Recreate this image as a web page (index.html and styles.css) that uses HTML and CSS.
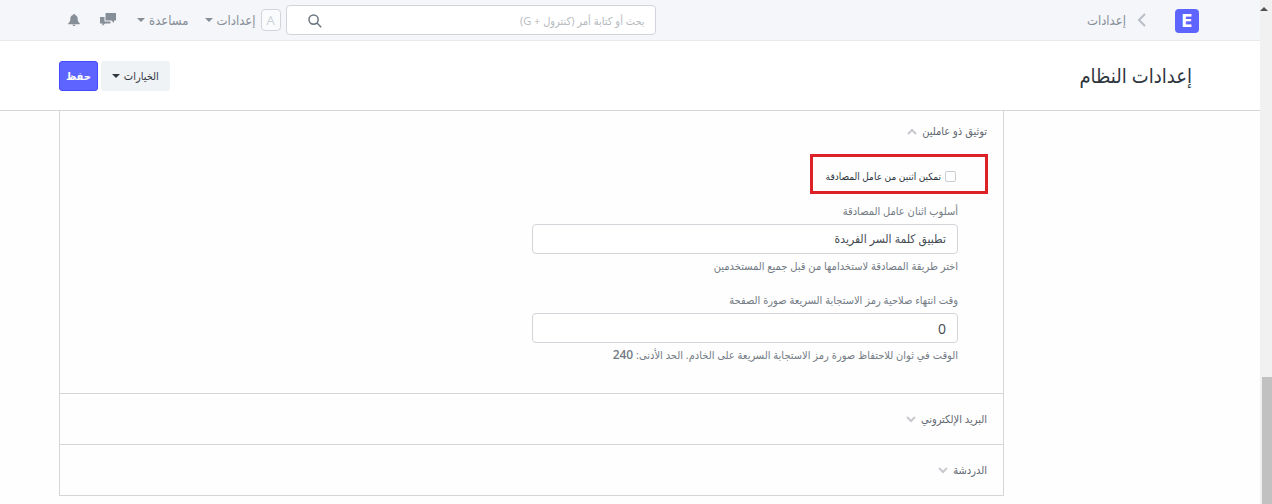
FILE: index.html
```html
<!DOCTYPE html>
<html lang="ar" dir="rtl">
<head>
    <meta charset="UTF-8">
    <meta name="viewport" content="width=device-width, initial-scale=1.0">
    <title>إعدادات النظام</title>
    <link rel="stylesheet" href="styles.css">
</head>
<body>
    <div class="scrollbar">
        <span class="scroll-up"></span>
        <span class="scroll-thumb"></span>
    </div>

    <div class="page">
        <header class="navbar">
            <div class="container navbar-inner">
                <a class="logo" href="#">E</a>
                <svg class="crumb-arrow" viewBox="0 0 9 14"><path d="M8 1L2 7l6 6"/></svg>
                <a class="crumb" href="#">إعدادات</a>

                <form class="search">
                    <input type="text" aria-label="بحث" placeholder="بحث أو كتابة أمر (كنترول + G)">
                    <svg class="search-icon" viewBox="0 0 14 14"><circle cx="5.6" cy="5.6" r="4.6"/><path d="M9 9l4.2 4.2"/></svg>
                </form>

                <span class="avatar">A</span>
                <button class="nav-link nav-settings" type="button">إعدادات <span class="caret"></span></button>
                <button class="nav-link nav-help" type="button">مساعدة <span class="caret"></span></button>
                <button class="nav-icon" type="button" aria-label="المحادثات">
                    <svg width="16" height="14" viewBox="0 0 16 14"><path d="M6 0h9.500q.5 0 .5.500V7q0 .5-.5.500H14V10L11.500 7.500H6q-.5 0-.5-.5V.5Q5.500 0 6 0z"/><path d="M.5 4H4.500V8q0 .6.6.6h5.400V10q0 .5-.5.5H5L2.500 13v-2.500h-2Q0 10.500 0 10V4.500Q0 4 .5 4z"/></svg>
                </button>
                <button class="nav-icon" type="button" aria-label="الإشعارات">
                    <svg width="12" height="12" viewBox="0 0 12 12"><path d="M6 0c.6 0 1 .4 1 .9C8.700 1.300 9.600 2.600 9.600 4.300c0 2.600.7 4 2 4.900.5.400.3 1-.2 1H.6c-.5 0-.7-.6-.2-1 1.300-.9 2-2.300 2-4.900C2.400 2.600 3.300 1.300 5 .9 5 .4 5.400 0 6 0zM4.500 10.700h3C7.400 11.500 6.800 12 6 12s-1.400-.5-1.500-1.300z"/></svg>
                </button>
            </div>
        </header>

        <div class="page-head">
            <div class="container page-head-inner">
                <h1>إعدادات النظام</h1>
                <button class="btn" type="button">الخيارات <span class="caret"></span></button>
                <button class="btn btn-primary" type="button">حفظ</button>
            </div>
        </div>

        <main class="container">
            <div class="form-layout">
                <section class="section section-open">
                    <h2 class="section-title">توثيق ذو عاملين
                        <svg class="toggle" viewBox="0 0 10 7"><path d="M1 6l4-4 4 4"/></svg>
                    </h2>
                    <div class="form-column">
                        <div class="check">
                            <input type="checkbox" id="enable">
                            <label for="enable">تمكين اثنين من عامل المصادقة</label>
                            <span class="highlight"></span>
                        </div>
                        <div class="field">
                            <label for="method">أسلوب اثنان عامل المصادقة</label>
                            <select id="method">
                                <option>تطبيق كلمة السر الفريدة</option>
                            </select>
                            <p class="help">اختر طريقة المصادقة لاستخدامها من قبل جميع المستخدمين</p>
                        </div>
                        <div class="field">
                            <label for="lifespan">وقت انتهاء صلاحية رمز الاستجابة السريعة صورة الصفحة</label>
                            <input type="text" id="lifespan" value="0">
                            <p class="help">الوقت في ثوان للاحتفاظ صورة رمز الاستجابة السريعة على الخادم. الحد الأدنى: <b>240</b></p>
                        </div>
                    </div>
                </section>
                <section class="section">
                    <h2 class="section-title">البريد الإلكتروني
                        <svg class="toggle" viewBox="0 0 10 7"><path d="M1 1l4 4 4-4"/></svg>
                    </h2>
                </section>
                <section class="section">
                    <h2 class="section-title">الدردشة
                        <svg class="toggle" viewBox="0 0 10 7"><path d="M1 1l4 4 4-4"/></svg>
                    </h2>
                </section>
            </div>
        </main>
    </div>
</body>
</html>
```
FILE: styles.css
```css
* {
    box-sizing: border-box;
}

body {
    margin: 0;
    display: flex;
    min-height: 100vh;
    background: #fefefe;
    color: #2e3640;
    font-family: "Open Sans", "DejaVu Sans Condensed", "DejaVu Sans", sans-serif;
    font-size: 11px;
    line-height: 18px;
}

button,
input,
select {
    font: inherit;
    color: inherit;
}

button {
    padding: 0;
    border: 0;
    background: none;
}

a {
    text-decoration: none;
}

svg {
    display: block;
    flex: none;
}

/* scrollbar */
.scrollbar {
    flex: none;
    display: flex;
    flex-direction: column;
    justify-content: space-between;
    width: 12px;
    background: #f1f1f1;
}

.scroll-up {
    margin: 7px 4px 0 0;
    width: 8px;
    border: 4px solid transparent;
    border-top: 0;
    border-bottom-color: #505050;
}

.scroll-thumb {
    width: 10px;
    height: 127px;
    background: #c1c1c1;
}

.page {
    flex: 1;
    min-width: 0;
}

.container {
    max-width: 1172px;
    margin: 0 auto;
    padding: 0 15px;
}

/* navbar */
.navbar {
    background: #f5f6fa;
    border-bottom: 1px solid #e8eaee;
}

.navbar-inner {
    display: flex;
    align-items: center;
    height: 40px;
    color: #868e97;
}

.logo {
    width: 24px;
    height: 24px;
    margin: 2px 2px 0 0;
    border-radius: 4px;
    background: #5e64ff;
    color: #fff;
    font-family: Inter, sans-serif;
    font-size: 17px;
    font-weight: 800;
    line-height: 24px;
    text-align: center;
}

.crumb-arrow {
    width: 9px;
    height: 14px;
    margin: 0 29px 0 11px;
    fill: none;
    stroke: #b8bec6;
    stroke-width: 2;
}

.crumb {
    color: #868e97;
    font-size: 13px;
}

.search {
    position: relative;
    width: 370px;
    margin: 0 auto 0 5px;
}

.search input {
    display: block;
    width: 100%;
    height: 30px;
    padding: 0 10px;
    border: 1px solid #d1d4da;
    border-radius: 4px;
    background: #fff;
}

.search input::placeholder {
    color: #b5b9be;
    opacity: 1;
}

.search-icon {
    position: absolute;
    left: 22px;
    top: 9px;
    width: 14px;
    height: 14px;
    fill: none;
    stroke: #6c7680;
    stroke-width: 1.5;
}

.avatar {
    width: 20px;
    height: 22px;
    margin-left: 5px;
    border: 1px solid #d1d4da;
    border-radius: 4px;
    background: #fafbfc;
    color: #ccd2d8;
    font-size: 13px;
    line-height: 20px;
    text-align: center;
}

.nav-link {
    display: flex;
    align-items: center;
    gap: 4px;
    margin-left: 16px;
    font-size: 13px;
}

.nav-link.nav-help {
    margin-left: 21px;
}

.caret {
    border: 4px solid transparent;
    border-top-color: currentColor;
    border-bottom: 0;
}

.nav-icon {
    margin-left: 20px;
    color: #868e97;
}

.nav-icon:last-child {
    margin-left: 9px;
}

.nav-icon svg {
    fill: currentColor;
}

/* page head */
.page-head {
    border-bottom: 1px solid #d4d6da;
    background: #fff;
}

.page-head-inner {
    display: flex;
    align-items: center;
    gap: 3px;
    height: 69px;
}

.page-head h1 {
    margin: 0 9px 0 auto;
    font-size: 20px;
    font-weight: 400;
    line-height: 30px;
}

.btn {
    display: flex;
    align-items: center;
    gap: 4px;
    height: 30px;
    padding: 0 11px;
    border-radius: 3px;
    background: #f0f3f6;
}

.btn-primary {
    padding: 0 6px;
    border: 1px solid #444bff;
    background: #5e64ff;
    color: #fff;
    font-weight: 600;
}

/* form */
.form-layout {
    width: 945px;
    max-width: 100%;
    margin-right: auto;
    border: 1px solid #d4d6da;
    border-top: 0;
}

.section {
    padding: 16px 0;
}

.section + .section {
    border-top: 1px solid #d4d6da;
}

.section-open {
    padding: 11px 0 13px;
}

.section-title {
    display: flex;
    align-items: center;
    gap: 5px;
    margin: 0;
    padding: 0 16px;
    color: #5f6770;
    font-size: 11px;
    font-weight: 400;
    line-height: 18px;
}

.toggle {
    width: 10px;
    height: 7px;
    fill: none;
    stroke: #c8cacf;
    stroke-width: 2;
}

.form-column {
    width: 50%;
    padding-right: 45px;
}

.check {
    position: relative;
    display: flex;
    align-items: center;
    gap: 4px;
    margin: 27px 2px 17px 0;
    font-size: 10px;
}

.check input {
    appearance: none;
    width: 11px;
    height: 11px;
    margin: 0;
    border: 1px solid #c9ced3;
    border-radius: 2px;
    background: #fff;
}

/* marks the option being described */
.highlight {
    position: absolute;
    top: -13px;
    right: -32px;
    width: 178px;
    height: 40px;
    border: 3px solid #dc2127;
}

.field {
    margin-bottom: 16px;
    color: #737b84;
}

.field label {
    display: block;
    margin-bottom: 4px;
}

.field input,
.field select {
    display: block;
    appearance: none;
    width: 100%;
    height: 30px;
    padding: 0 11px;
    border: 1px solid #d4d4da;
    border-radius: 4px;
    background: #fff;
    color: #444b53;
    font-size: 14px;
}

.field select {
    font-size: 12px;
}

.help {
    margin: 3px 0 0;
}

.help b {
    font-size: 12px;
    font-weight: 600;
    line-height: 1;
}
```
